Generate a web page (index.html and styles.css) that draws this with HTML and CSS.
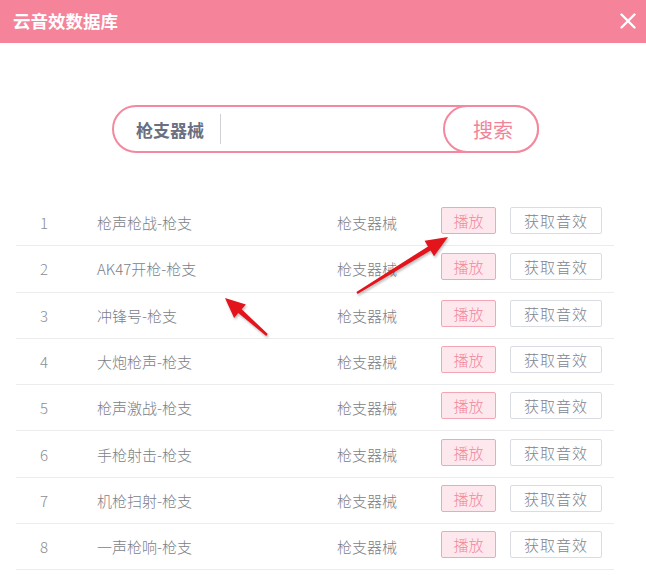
FILE: index.html
```html
<!DOCTYPE html>
<html lang="zh-CN">
<head>
  <meta charset="UTF-8">
  <title>云音效数据库</title>
  <link rel="stylesheet" href="styles.css">
</head>
<body>

  <div class="dialog">
    <!-- Header -->
    <div class="header">
      <span class="header-title">云音效数据库</span>
      <svg class="close" width="16" height="16" viewBox="0 0 16 16">
        <path d="M1.5 1.5 L14.5 14.5 M14.5 1.5 L1.5 14.5" stroke="#fff" stroke-width="2.4" stroke-linecap="round"/>
      </svg>
    </div>

    <!-- Search -->
    <div class="search">
      <span class="search-label">枪支器械</span>
      <span class="search-divider"></span>
      <input class="search-input" type="text">
      <button class="search-btn">搜索</button>
    </div>

    <!-- List -->
    <div class="list">
      <div class="row">
        <span class="col-num">1</span>
        <span class="col-name">枪声枪战-枪支</span>
        <span class="col-cat">枪支器械</span>
        <span class="btn-play">播放</span>
        <span class="btn-get">获取音效</span>
      </div>
      <div class="row">
        <span class="col-num">2</span>
        <span class="col-name">AK47开枪-枪支</span>
        <span class="col-cat">枪支器械</span>
        <span class="btn-play">播放</span>
        <span class="btn-get">获取音效</span>
      </div>
      <div class="row">
        <span class="col-num">3</span>
        <span class="col-name">冲锋号-枪支</span>
        <span class="col-cat">枪支器械</span>
        <span class="btn-play">播放</span>
        <span class="btn-get">获取音效</span>
      </div>
      <div class="row">
        <span class="col-num">4</span>
        <span class="col-name">大炮枪声-枪支</span>
        <span class="col-cat">枪支器械</span>
        <span class="btn-play">播放</span>
        <span class="btn-get">获取音效</span>
      </div>
      <div class="row">
        <span class="col-num">5</span>
        <span class="col-name">枪声激战-枪支</span>
        <span class="col-cat">枪支器械</span>
        <span class="btn-play">播放</span>
        <span class="btn-get">获取音效</span>
      </div>
      <div class="row">
        <span class="col-num">6</span>
        <span class="col-name">手枪射击-枪支</span>
        <span class="col-cat">枪支器械</span>
        <span class="btn-play">播放</span>
        <span class="btn-get">获取音效</span>
      </div>
      <div class="row">
        <span class="col-num">7</span>
        <span class="col-name">机枪扫射-枪支</span>
        <span class="col-cat">枪支器械</span>
        <span class="btn-play">播放</span>
        <span class="btn-get">获取音效</span>
      </div>
      <div class="row">
        <span class="col-num">8</span>
        <span class="col-name">一声枪响-枪支</span>
        <span class="col-cat">枪支器械</span>
        <span class="btn-play">播放</span>
        <span class="btn-get">获取音效</span>
      </div>
    </div>

    <!-- annotation arrows -->
    <svg class="arrows" width="646" height="575" viewBox="0 0 646 575">
      <polygon points="357.6,294.0 430.6,250.6 434.0,256.2 448,237 424.6,240.8 428.0,246.4 356.4,292.0" fill="#e3141c"/>
      <polygon points="267.8,334.1 241.7,309.3 245.9,304.5 225,298 234.1,317.9 238.3,313.1 266.2,335.9" fill="#e3141c"/>
    </svg>
  </div>

</body>
</html>
```

FILE: styles.css
```css
* {
  box-sizing: border-box;
}
body {
  margin: 0;
  padding: 0;
  background: #fff;
  font-family: 'Noto Sans CJK SC', 'Noto Sans', sans-serif;
}

.dialog {
  position: relative;
  width: 646px;
  height: 575px;
  overflow: hidden;
}

.header {
  height: 43px;
  background: #f5849b;
  display: flex;
  align-items: center;
  justify-content: space-between;
  padding: 0 10px 2px 13px;
}

.header-title {
  color: #fff;
  font-size: 17.5px;
  font-weight: bold;
}

.search {
  margin: 62px 0 0 112px;
  width: 427px;
  height: 48px;
  border: 2px solid #f3899f;
  border-radius: 24px;
  display: flex;
  align-items: center;
}

.search-label {
  padding-left: 22px;
  font-size: 17px;
  font-weight: bold;
  color: #6a6f82;
}

.search-divider {
  width: 1px;
  height: 30px;
  margin-left: 16px;
  background: #cfd1d6;
}

.search-input {
  flex: 1;
  border: none;
  outline: none;
  height: 30px;
}

.search-btn {
  width: 96px;
  height: 48px;
  margin-right: -2px;
  border: 2px solid #f3899f;
  border-radius: 24px;
  background: #fff;
  color: #f2849a;
  font-family: inherit;
  font-size: 20px;
  padding: 0 0 0 4px;
}

.list {
  margin: 47px 0 0 16px;
  width: 598px;
}

.row {
  height: 46.3px;
  display: flex;
  align-items: center;
  border-bottom: 1px solid #ececee;
  font-size: 15px;
  font-weight: 300;
}

.col-num {
  width: 56px;
  text-align: center;
  color: #8a8d95;
}

.col-name {
  width: 240px;
  padding-left: 25px;
  color: #7b7e87;
}

.col-cat {
  width: 129px;
  padding-left: 25px;
  color: #7b7e87;
}

.btn-play {
  width: 55px;
  height: 27px;
  margin-top: -4px;
  display: flex;
  align-items: center;
  justify-content: center;
  background: #fde9ed;
  border: 1px solid #f5a6b5;
  border-radius: 2px;
  color: #f2869c;
}

.btn-get {
  width: 92px;
  height: 27px;
  margin: -4px 0 0 14px;
  display: flex;
  align-items: center;
  justify-content: center;
  background: #fff;
  border: 1px solid #d9dce3;
  border-radius: 2px;
  color: #80848f;
  letter-spacing: 1px;
}

.arrows {
  position: absolute;
  left: 0;
  top: 0;
  pointer-events: none;
  filter: drop-shadow(1px 2px 1px rgba(0, 0, 0, 0.25));
}
```
